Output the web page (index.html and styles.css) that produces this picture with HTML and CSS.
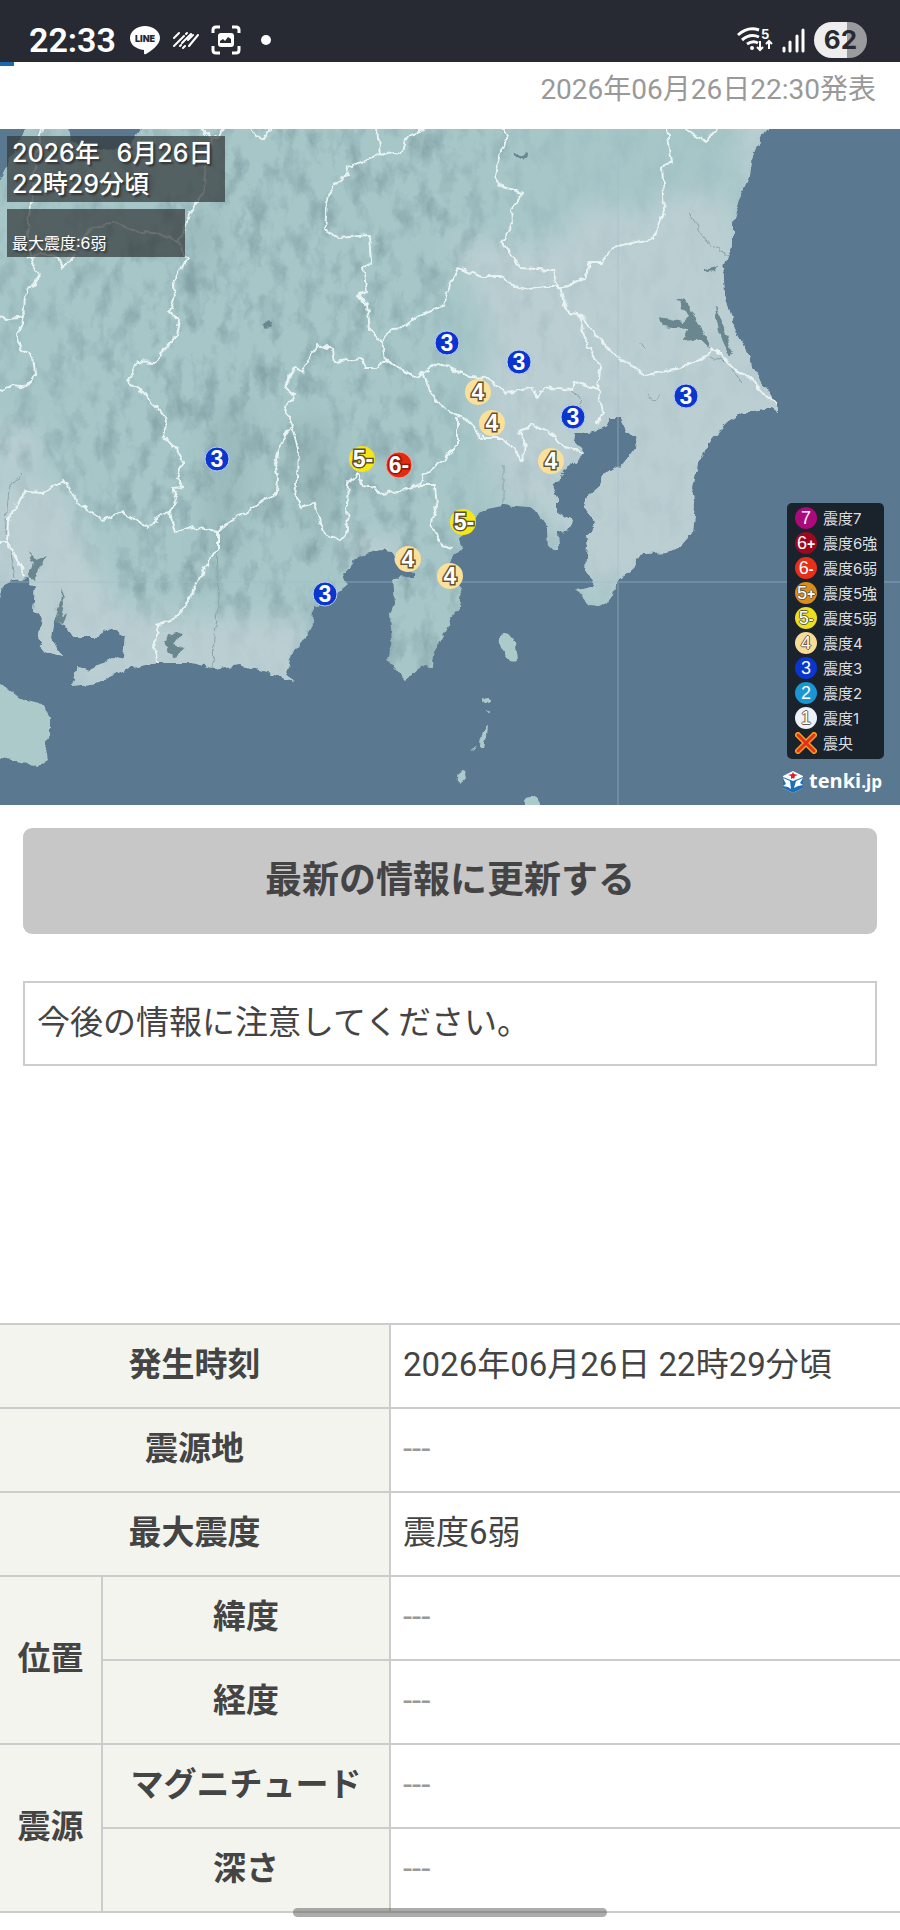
FILE: index.html
```html
<!DOCTYPE html>
<html lang="ja">
<head>
    <meta charset="UTF-8">
    <meta name="viewport" content="width=device-width, initial-scale=1.0">
    <title>地震情報</title>
    <link rel="stylesheet" href="styles.css">
</head>
<body>

<div class="status-bar">
    <div class="status-left">
        <span class="clock">22:33</span>
        <svg width="30" height="30" viewBox="0 0 30 30">
            <path d="M15 1C7 1 0 6 0 13c0 6 5 11 14 12v3q0 2 2 1c5-3 14-9 14-16C30 6 23 1 15 1z" fill="#fff"/>
            <text x="15" y="17" class="line-text">LINE</text>
        </svg>
        <svg width="27" height="18" viewBox="0 0 27 18" stroke="#fff" stroke-width="2" stroke-linecap="round">
            <path d="M2 7l5-5M2 15L12 5M14 3l1-1M8 15l1-1M10 12l9-9M16 9l5-5M11 17l2-2M17 15l9-11"/>
        </svg>
        <svg width="30" height="30" viewBox="0 0 30 30">
            <path d="M2 8V5q0-3 3-3h4M21 2h4q3 0 3 3v3M28 21v4q0 3-3 3h-4M9 28H5q-3 0-3-3v-4" fill="none" stroke="#fff" stroke-width="3"/>
            <rect x="7" y="8" width="16" height="14" rx="3" fill="#fff"/>
            <path d="M9 18v-2l3-2 2 2 3-4 3 2v4z" fill="#272a32"/>
        </svg>
        <span class="dot"></span>
    </div>
    <div class="status-right">
        <svg width="36" height="28" viewBox="0 0 36 28" fill="none" stroke="#fff" stroke-width="3">
            <path d="M1 9Q11 0 22 4M5 14q8-7 17-3M10 18q6-4 11-1"/>
            <circle cx="15" cy="22" r="2" fill="#fff" stroke="none"/>
            <path d="M23 15v9M20 21l3 3 3-3M32 23v-8M29 18l3-3 3 3" stroke-width="2"/>
            <text x="24" y="13" class="wifi-text">5</text>
        </svg>
        <svg width="23" height="25" viewBox="0 0 23 25" stroke="#fff" stroke-width="3" stroke-linecap="round">
            <path d="M2 20v3M8 14v9M15 8v15M21 2v21"/>
        </svg>
        <span class="battery">62</span>
    </div>
</div>
<div class="loading"></div>

<p class="announce">2026年06月26日22:30発表</p>

<div class="map">
    <svg class="map-svg" viewBox="0 0 900 676">
        <defs>
            <!-- 海岸線のギザギザ -->
            <filter id="rough" x="-20" y="-20" width="940" height="716" filterUnits="userSpaceOnUse">
                <feTurbulence type="fractalNoise" baseFrequency="0.12" numOctaves="2" seed="4" result="n"/>
                <feDisplacementMap in="SourceGraphic" in2="n" scale="7" xChannelSelector="R" yChannelSelector="G"/>
            </filter>
            <!-- 山の陰影 -->
            <filter id="relief" x="-20" y="-20" width="940" height="716" filterUnits="userSpaceOnUse" color-interpolation-filters="sRGB">
                <feTurbulence type="fractalNoise" baseFrequency="0.06 0.03" numOctaves="4" seed="11"/>
                <feColorMatrix values="0 0 0 0 0.44  0 0 0 0 0.56  0 0 0 0 0.58  2 0 0 0 -0.9"/>
            </filter>
            <filter id="soft" x="-30%" y="-30%" width="160%" height="160%">
                <feGaussianBlur stdDeviation="14"/>
            </filter>
            <path id="land" d="M-20 90L0 50 20 10 36-20H66L70 12 88 19 112 22 130 15 141 0V-20H770V0L763 4 752 33 750 46 740 68 733 93 733 113 727 126 723 138 725 166 733 193 743 216 755 241 772 269 778 273 778 283 772 279 753 283 743 283 727 294 710 313 697 335 692 359 695 378 692 404 680 418 667 424 642 425 633 439 618 451 613 466 607 474 599 478 590 477 585 468 574 462 592 458 593 451 586 444 588 416 586 406 595 399 593 389 584 378 588 366 600 356 602 346 622 336 635 319 638 308 627 303 620 289 610 289 605 298 597 301 583 304 573 304 578 316 585 324 573 335 562 343 560 353 552 356 557 369 557 383 572 391 568 401 558 404 559 419 548 419 547 399 538 383 530 378 503 376 487 379 475 388 465 399 460 409 463 418 452 428 450 436 460 460 462 464 460 479 450 491 448 499 433 526 432 538 425 536 405 551 393 539 387 529 392 513 390 486 395 473 393 449 415 448 415 443 397 436 393 423 380 421 355 428 350 438 343 446 347 456 333 468 313 479 312 496 303 513 292 524 287 541 293 553 267 543 240 536 213 540 187 534 157 534 130 539 97 554 72 557 78 538 90 541 103 534 113 528 123 531 125 506 110 499 97 508 72 508 67 499 60 496 55 486 52 509 62 528 47 523 38 513 42 489 33 483 35 459 28 449 13 451 3 456 0 469-20 480z"/>
            <clipPath id="landClip"><use href="#land"/></clipPath>
            <linearGradient id="fade" x1="0" x2="1" y1="0" y2="0">
                <stop offset="0" stop-color="#888"/>
                <stop offset="0.2" stop-color="#fff"/>
                <stop offset="0.5" stop-color="#ddd"/>
                <stop offset="0.62" stop-color="#333"/>
                <stop offset="1" stop-color="#111"/>
            </linearGradient>
            <mask id="mountains">
                <rect x="-20" y="-20" width="940" height="716" fill="url(#fade)"/>
                <path d="M-20 350L60 355 90 420 120 480 220 490 300 485 320 580 -20 580zM440 150l80-30v360l-60-80z" fill="#222" filter="url(#soft)"/>
            </mask>
        </defs>

        <g filter="url(#rough)">
            <rect x="-20" y="-20" width="940" height="716" fill="#5a788f"/>
            <use href="#land" fill="#a6c6c8"/>
            <g clip-path="url(#landClip)">
                <g fill="#bbcfd3" filter="url(#soft)">
                    <path d="M450 110L560 115 580 75 640 85 690 60 730 70 800 280 700 430 590 470 540 380 500 370 480 280 490 200z"/>
                    <path d="M-20 350L60 355 90 420 120 480 220 490 300 485 320 560 0 570z"/>
                    <path d="M740-20h40v80h-40zM-20 300h60v40h-60zM340 415l45-10 30 30-40 20z"/>
                </g>
                <g mask="url(#mountains)">
                    <rect x="-20" y="-20" width="940" height="600" filter="url(#relief)" opacity=".7"/>
                </g>
                <g fill="#799899" opacity=".4" filter="url(#soft)">
                    <path d="M220 280l25-10-12 130-25 40zM290 300l35-10 5 120-25-20zM190 80l25 20-20 60z"/>
                </g>
            </g>
            <path d="M-20 545L0 554 20 569 40 574 50 589 50 606 45 616 48 631 38 638 23 633 0 629-20 632z" fill="#accaca"/>
            <g fill="#accaca">
                <path d="M501 504q12-1 15 12l2 15q-11 3-16-9-4-10-1-18zM488 595l-1 12-3 12-4-1q0-12 8-23zM471 620l6-2-3 3zM460 641l5 1 2 7-6 2-3 3q-1-6 2-13zM525 690v-14q-1-9 7-8 6 1 7 8v14z"/>
                <circle cx="486" cy="571" r="3"/>
                <circle cx="489" cy="583" r="1"/>
            </g>
            <!-- 湖と川 -->
            <g fill="#6a878f">
                <path d="M676 169L687 173 693 186 705 206 710 218 695 211 683 212 687 200 663 198 660 188 683 193 689 188zM715 176L720 186 727 209 733 226 730 228 721 208 717 194zM705 141l12-3-2 4-10 1zM163 511l9-6 11-2-9 12 9 4-6 10-8-6zM262 196l6-4 3 4-5 4zM514 24l8 4 4-4 2 3-4 5-8-3z"/>
                <path d="M28 449l5-16-4-10 8 8 10-4-10 12-2 12zM55 490l6-18 2-14 1 16-4 14 6-5-4 14z"/>
            </g>
            <g fill="none" stroke="#8aa3a9" stroke-width="1">
                <path d="M213 540l1-35 5-35-2-50M503 376v-40M15 449l-4-25-6-20 4-45 12-14M642 213l2 8M647 266l8 4 6-3M710 228l18 6 14 20M727 126l-20-13-12-18-6-10M570 261l10 8 4 22"/>
            </g>
            <!-- 県境 -->
            <g class="border">
                <path d="M41-20V0L36 30 32 68 27 103 32 133 39 146 25 169 23 188 17 206 22 220 33 229 35 244 28 258 13 256 3 261-15 256M-15 180L-5 180 5 191 23 188"/>
                <path d="M202-20V0L213 11 207 26 203 63 193 78 185 99 177 113 187 129 173 156 175 168 169 183 180 193 177 206 160 226 155 234 137 233 127 253 143 263 157 279 167 293 163 306 173 316 183 333 178 349 183 358 173 359 177 371 170 383 175 404 193 398 218 403 230 393 253 379 277 364 278 349 275 336 278 319 292 296 285 279 293 266 285 259 295 238 302 243 318 215 333 221 335 233 360 229 365 239 377 239 385 231 382 213 370 201 367 176 358 166 367 163 363 139 371 133 369 106 340 109 325 101 327 73 333 56 347 46 348 38 380 26 393 23 402 24 405 9 423 1 430-15"/>
                <path d="M377-20V0L380 26M248-15L252 3 263 11 270 1 272-15M213 11L223 2 230-15M27 130L40 124 58 128 62 139 72 131 83 109 93 98 117 94 137 103 155 103 177 113"/>
                <path d="M292 296L298 320 297 350 295 366 302 379 315 374 323 403 340 412 348 403 347 376 348 353 358 345 363 356 375 358 377 366 403 361 420 356 423 346 440 334 457 316 457 289"/>
                <path d="M385 231L400 239 417 248 424 244 427 256 437 273 450 283 467 291 483 309 503 309 523 331 525 313 518 303 532 296 553 306 565 319 583 324"/>
                <path d="M424 244L437 234 450 239 470 248 487 249 507 264 533 259 537 267 550 258 572 261 574 253 598 261 603 283 597 296"/>
                <path d="M420 356L435 356 437 376 430 396 442 416 452 419"/>
                <path d="M382 213L393 199 405 198 420 186 443 176 450 156 458 139 483 148 502 148 520 161 547 158 558 158 552 141 520 139 502 113 513 94 512 80 523 64 497 56 495 46 500 23 508 6 503 0V-20"/>
                <path d="M558 158L565 158 585 149 590 133 602 133 613 118 653 109 665 81 662 38 672 33 667 0V-20M680-15L688 1 705 13 717 0 725-15"/>
                <path d="M560 158L563 169 570 186 578 183 585 209 600 239 598 261M578 183L593 203 607 218 617 228 647 246 680 239 707 228 712 219 733 239 750 249 767 269 778 273"/>
                <path d="M-15 414L7 414 8 391 25 363 43 364 63 351 80 376 103 391 123 383 147 398 165 384 170 383M7 414L20 436 24 448"/>
                <path d="M218 403L218 418 197 453 185 479 175 489 158 496 155 513 157 534"/>
            </g>
        </g>
        <path d="M618 0V676M0 453H900" stroke="#a5bcc8" stroke-width="2" opacity=".3"/>

        <!-- 各地の震度 -->
        <g class="mark s3">
            <circle cx="447" cy="214" r="12"/><text x="447" y="222">3</text>
            <circle cx="519" cy="233" r="12"/><text x="519" y="241">3</text>
            <circle cx="573" cy="288" r="12"/><text x="573" y="296">3</text>
            <circle cx="686" cy="267" r="12"/><text x="686" y="275">3</text>
            <circle cx="217" cy="330" r="12"/><text x="217" y="338">3</text>
            <circle cx="325" cy="465" r="12"/><text x="325" y="473">3</text>
        </g>
        <g class="mark s4">
            <circle cx="478" cy="263" r="13"/><text x="478" y="271">4</text>
            <circle cx="492" cy="294" r="13"/><text x="492" y="302">4</text>
            <circle cx="551" cy="332" r="13"/><text x="551" y="340">4</text>
            <circle cx="408" cy="430" r="13"/><text x="408" y="438">4</text>
            <circle cx="450" cy="447" r="13"/><text x="450" y="455">4</text>
        </g>
        <g class="mark s5">
            <circle cx="362" cy="330" r="13"/><text x="363" y="338">5-</text>
            <circle cx="463" cy="393" r="13"/><text x="464" y="401">5-</text>
        </g>
        <g class="mark s6">
            <circle cx="399" cy="336" r="13"/><text x="399" y="344">6-</text>
        </g>
    </svg>

    <div class="map-info">
        <p class="map-date">2026年&ensp;&thinsp;6月26日<br>22時29分頃</p>
        <p class="map-max">最大震度:6弱</p>
    </div>

    <ul class="legend">
        <li><span class="ball b7">7</span>震度7</li>
        <li><span class="ball b6p">6<small>+</small></span>震度6強</li>
        <li><span class="ball b6m">6<small>-</small></span>震度6弱</li>
        <li><span class="ball b5p">5<small>+</small></span>震度5強</li>
        <li><span class="ball b5m">5<small>-</small></span>震度5弱</li>
        <li><span class="ball b4">4</span>震度4</li>
        <li><span class="ball b3">3</span>震度3</li>
        <li><span class="ball b2">2</span>震度2</li>
        <li><span class="ball b1">1</span>震度1</li>
        <li>
            <svg width="22" height="22" viewBox="0 0 22 22" stroke-linecap="round">
                <path d="M3 3l16 16M19 3L3 19" stroke="#f0a020" stroke-width="6"/>
                <path d="M3 3l16 16M19 3L3 19" stroke="#e6301c" stroke-width="3"/>
            </svg>震央
        </li>
    </ul>

    <div class="logo">
        <svg width="22" height="22" viewBox="0 0 22 22">
            <path d="M11 0l10 5v12l-10 5-10-5V5z" fill="#fff"/>
            <path d="M11 10L1 6v11l10 5 10-5V6z" fill="#1e6fb8"/>
            <path d="M11 1l1 2 4 1-3 1-1 3-1-1-2 1V5L6 4l4-1z" fill="#d8232f"/>
            <path d="M1 7l7 3 1 8-3-2-5-1 3-2zM21 7l-7 3-2 7 4-2 5-1-3-2z" fill="#fff"/>
        </svg>
        <span>tenki<small>.jp</small></span>
    </div>
</div>

<div class="content">
    <button class="btn-update" type="button">最新の情報に更新する</button>
    <p class="message">今後の情報に注意してください。</p>
</div>

<table class="quake">
    <tr>
        <th colspan="2" scope="row">発生時刻</th>
        <td>2026年06月26日 22時29分頃</td>
    </tr>
    <tr>
        <th colspan="2" scope="row">震源地</th>
        <td class="none">---</td>
    </tr>
    <tr>
        <th colspan="2" scope="row">最大震度</th>
        <td>震度6弱</td>
    </tr>
    <tr>
        <th class="group" rowspan="2" scope="rowgroup">位置</th>
        <th class="item" scope="row">緯度</th>
        <td class="none">---</td>
    </tr>
    <tr>
        <th class="item" scope="row">経度</th>
        <td class="none">---</td>
    </tr>
    <tr>
        <th class="group" rowspan="2" scope="rowgroup">震源</th>
        <th class="item" scope="row">マグニチュード</th>
        <td class="none">---</td>
    </tr>
    <tr>
        <th class="item" scope="row">深さ</th>
        <td class="none">---</td>
    </tr>
</table>

<div class="home-bar"></div>

</body>
</html>
```
FILE: styles.css
```css
* {
    box-sizing: border-box;
}
body {
    margin: 0;
    background: #fff;
    color: #444;
    font-family: Roboto, "Noto Sans CJK JP", sans-serif;
    font-size: 33px;
}
p, ul {
    margin: 0;
    padding: 0;
}

/* status bar */
.status-bar {
    display: flex;
    justify-content: space-between;
    align-items: flex-end;
    height: 62px;
    padding: 0 33px 4px 29px;
    background: #272a32;
    color: #fff;
}
.status-left, .status-right {
    display: flex;
    align-items: center;
    height: 36px;
}
.status-left {
    gap: 12px;
}
.status-right {
    gap: 9px;
}
.clock {
    margin-right: 2px;
    font-size: 34px;
    font-weight: 600;
    line-height: 36px;
}
.line-text {
    font: 900 9px Inter, sans-serif;
    fill: #272a32;
    text-anchor: middle;
}
.wifi-text {
    font: 700 13px Inter, sans-serif;
    fill: #fff;
    stroke: none;
}
.dot {
    width: 10px;
    height: 10px;
    margin-left: 8px;
    border-radius: 50%;
    background: #fff;
}
.battery {
    width: 53px;
    border-radius: 18px;
    background: linear-gradient(90deg, #eee 62%, #999b9c 62%);
    color: #272a32;
    font: 700 26px/36px Inter, sans-serif;
    text-align: center;
}
.loading {
    width: 14px;
    height: 4px;
    background: #1a68ad;
}

.announce {
    padding: 4px 24px 19px;
    color: #999;
    font-size: 28px;
    line-height: 40px;
    text-align: right;
}

/* map */
.map {
    position: relative;
    overflow: hidden;
    font-family: Inter, "Noto Sans CJK JP", sans-serif;
}
.map-svg {
    display: block;
    width: 100%;
}
.border {
    fill: none;
    stroke: #eaf3f3;
    stroke-width: 2;
    stroke-linejoin: round;
}
.mark {
    font-family: "Liberation Sans", sans-serif;
    font-size: 23px;
    font-weight: 700;
    stroke-width: 1;
}
.mark text {
    fill: #fff;
    text-anchor: middle;
    paint-order: stroke;
    stroke-width: 3;
}
.s3 circle {
    fill: #0a35cf;
    stroke: #b9cdf5;
}
.s4 circle {
    fill: #fae09a;
}
.s5 circle {
    fill: #f6e616;
}
.s6 circle {
    fill: #e52a12;
    stroke: #f0aaa0;
}
.s4 text, .s5 text {
    stroke: #5e5236;
}
.s6 text {
    stroke: #8a1a10;
}
.map-info {
    position: absolute;
    top: 7px;
    left: 7px;
    display: flex;
    flex-direction: column;
    align-items: flex-start;
    gap: 7px;
    color: #fff;
    text-shadow: 2px 2px 2px #333;
}
.map-date {
    width: 218px;
    padding: 2px 5px;
    background: rgba(50, 54, 56, .7);
    font-size: 25px;
    font-weight: 500;
    line-height: 31px;
    white-space: nowrap;
}
.map-max {
    width: 178px;
    padding: 22px 5px 2px;
    background: rgba(50, 54, 56, .7);
    font-size: 16px;
    line-height: 24px;
}
.legend {
    position: absolute;
    right: 16px;
    bottom: 46px;
    width: 97px;
    padding: 2px 0 4px 8px;
    border-radius: 5px;
    background: #1a222c;
    color: #dcdfe2;
    list-style: none;
    font-size: 15px;
    white-space: nowrap;
}
.legend li {
    display: flex;
    align-items: center;
    gap: 6px;
    height: 25px;
}
.ball {
    width: 22px;
    height: 22px;
    border-radius: 50%;
    color: #fff;
    font-family: "Liberation Sans", sans-serif;
    font-size: 18px;
    line-height: 22px;
    text-align: center;
}
.ball small {
    font-size: 14px;
    font-weight: 700;
}
.b7 { background: #ab0a7c; }
.b6p { background: #9c0820; }
.b6m { background: #e6301c; }
.b5p { background: #dc8c1e; }
.b5m { background: #ece01c; }
.b4 { background: #f6dc96; }
.b3 { background: #0a35cf; }
.b2 { background: #1a96d2; }
.b1 { background: #eef0fa; }
.b5p, .b5m, .b4, .b1 {
    text-shadow: 1px 0 #655c48, -1px 0 #655c48, 0 1px #655c48, 0 -1px #655c48;
}
.logo {
    position: absolute;
    right: 18px;
    bottom: 10px;
    display: flex;
    align-items: center;
    gap: 5px;
    color: #fff;
    font: 700 20px/26px "Open Sans", sans-serif;
}
.logo small {
    font-size: 17px;
}

/* contents */
.content {
    padding: 23px 23px 0;
}
.btn-update {
    display: block;
    width: 100%;
    padding: 26px 0;
    border: none;
    border-radius: 9px;
    background: #c7c7c7;
    color: #444;
    font: 700 37px/54px Roboto, "Noto Sans CJK JP", sans-serif;
}
.message {
    margin-top: 47px;
    padding: 15px 12px 17px;
    border: 2px solid #ccc;
    line-height: 49px;
}

/* table */
.quake {
    width: 100%;
    margin-top: 257px;
    border-collapse: collapse;
    border-left-style: hidden;
    border-right-style: hidden;
}
.quake th, .quake td {
    padding: 16px 12px 18px;
    border: 2px solid #ccc;
    line-height: 48px;
}
.quake th {
    background: #f3f4ee;
    font-weight: 700;
}
.quake td {
    text-align: left;
}
.quake .group {
    width: 102px;
}
.quake .item {
    width: 288px;
}
.quake .none {
    color: #999;
}

.home-bar {
    position: fixed;
    bottom: 13px;
    left: 50%;
    width: 314px;
    height: 9px;
    margin-left: -157px;
    border-radius: 5px;
    background: rgba(90, 90, 90, .5);
}
```
